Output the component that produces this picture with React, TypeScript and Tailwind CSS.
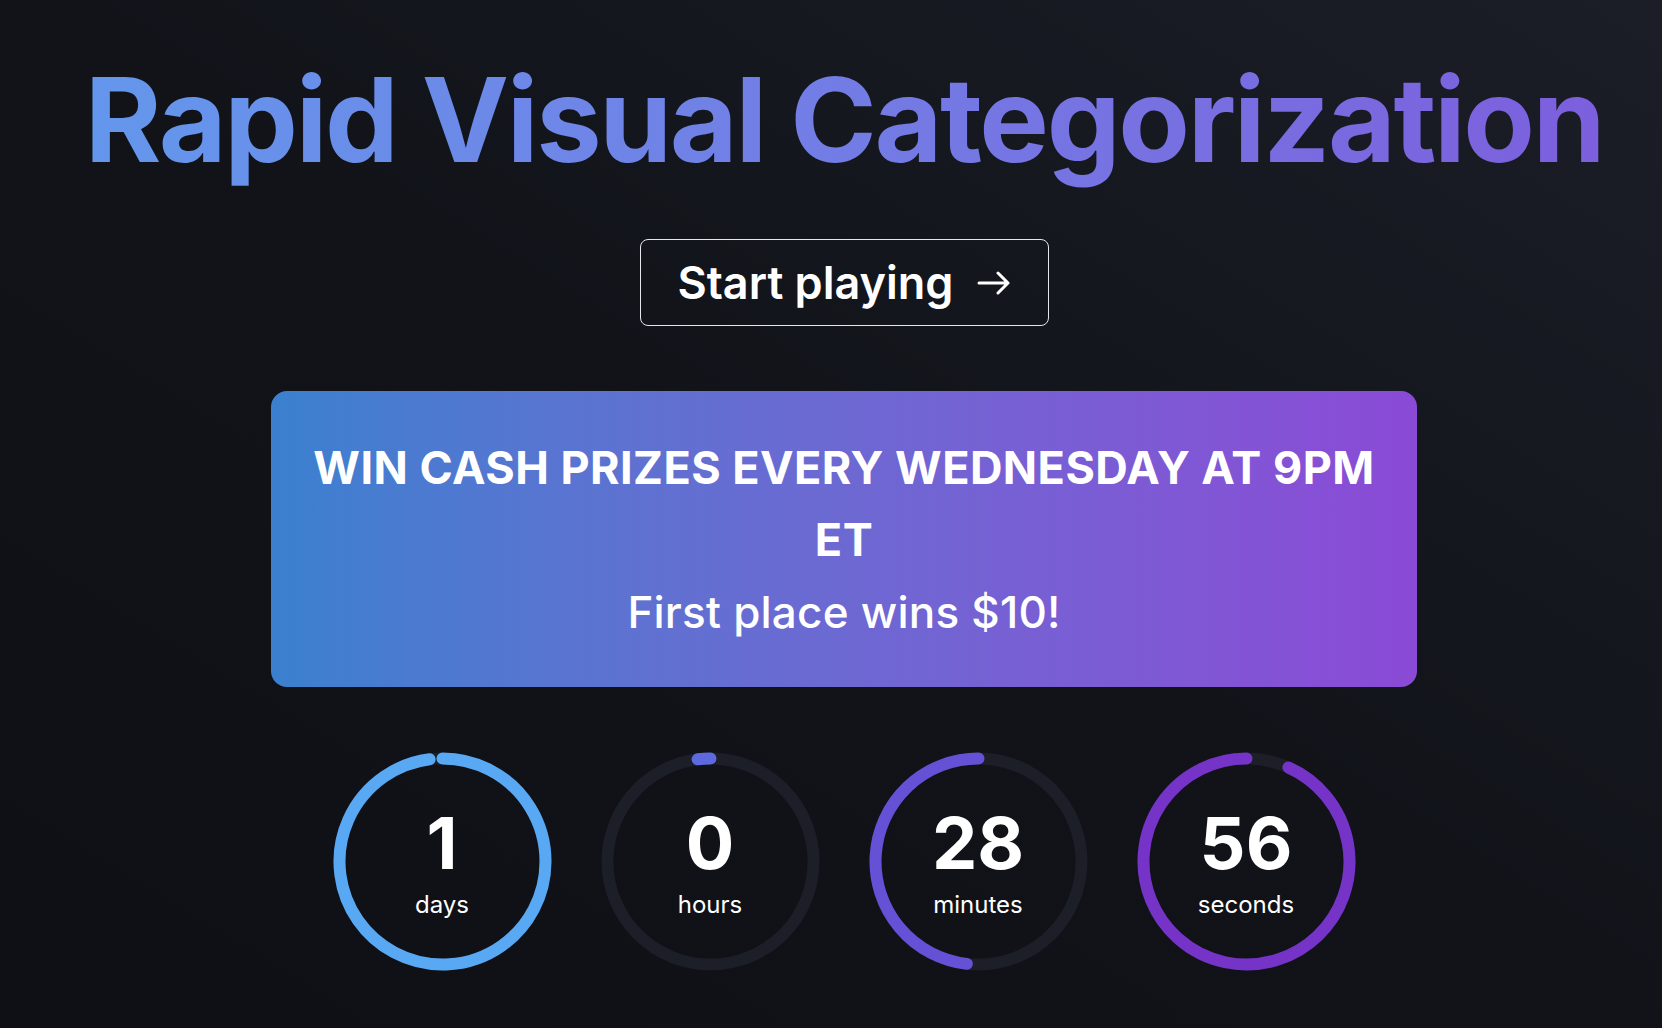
import React from "react";

const SIZE = 219;
const C = SIZE / 2;
const R = 103;

function pt(deg: number) {
  const t = (deg * Math.PI) / 180;
  return [C + R * Math.sin(t), C - R * Math.cos(t)];
}

function arc(a: number, b: number) {
  const [x1, y1] = pt(a);
  const [x2, y2] = pt(b);
  const large = b - a > 180 ? 1 : 0;
  return `M ${x1} ${y1} A ${R} ${R} 0 ${large} 1 ${x2} ${y2}`;
}

function Ring({
  value,
  label,
  from,
  to,
  color,
}: {
  value: string;
  label: string;
  from: number;
  to: number;
  color: string;
}) {
  return (
    <div className="relative w-[219px] h-[219px] flex items-center justify-center">
      <svg className="absolute inset-0" width={SIZE} height={SIZE} viewBox={`0 0 ${SIZE} ${SIZE}`}>
        <circle cx={C} cy={C} r={R} fill="none" stroke="#1c1e28" strokeWidth={12} />
        <path d={arc(from, to)} fill="none" stroke={color} strokeWidth={12} strokeLinecap="round" />
      </svg>
      <div className="relative flex flex-col items-center pt-[3px] text-white">
        <span className="text-[72px] font-bold leading-none">{value}</span>
        <span className="text-[24px] leading-[28px] mt-3">{label}</span>
      </div>
    </div>
  );
}

export default function App() {
  return (
    <div
      className="min-h-[1028px] w-full bg-gradient-to-bl from-[#1b1e27] via-[#111319] to-[#0e1016] text-white"
      style={{ fontFamily: "Inter, 'Noto Sans', sans-serif" }}
    >
      <div className="flex flex-col items-center pl-[26px] pt-[61px]">
        <h1 className="text-[117px] font-bold leading-none tracking-[-0.02em] whitespace-nowrap">
          <span className="bg-gradient-to-r from-[#6397ec] to-[#7c5fdd] bg-clip-text text-transparent">
            Rapid Visual Categorization
          </span>
        </h1>

        <button className="mt-[61px] h-[87px] w-[409px] flex items-center justify-center gap-[23px] rounded-[8px] border-[1.5px] border-[#e5e7eb] text-[45px] font-semibold text-white">
          <span>Start playing</span>
          <svg width="34" height="24" viewBox="0 0 34 24" fill="none" stroke="white" strokeWidth="3" strokeLinecap="round" strokeLinejoin="round">
            <path d="M2 12 H31 M21 2 L31 12 L21 22" />
          </svg>
        </button>

        <div className="mt-[65px] w-[1146px] rounded-[16px] bg-gradient-to-r from-[#3a80cf] to-[#8a4ad6] px-[40px] pt-[41px] pb-[39px] text-center">
          <p className="text-[45px] font-bold leading-[72px] tracking-[0.01em] text-white">
            WIN CASH PRIZES EVERY WEDNESDAY AT 9PM ET
          </p>
          <p className="text-[44px] font-medium leading-[72px] tracking-[0.005em] text-white">First place wins $10!</p>
        </div>

        <div className="mt-[65px] flex gap-[49px]">
          <Ring value="1" label="days" from={0} to={352.8} color="#58a8f3" />
          <Ring value="0" label="hours" from={352.8} to={360} color="#5d69df" />
          <Ring value="28" label="minutes" from={186.5} to={360} color="#6551d5" />
          <Ring value="56" label="seconds" from={24} to={360} color="#7533c7" />
        </div>
      </div>
    </div>
  );
}
